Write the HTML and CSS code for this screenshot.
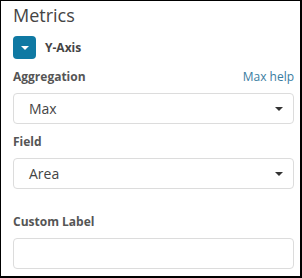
FILE: index.html
```html
<!DOCTYPE html>
<html lang="en">

<head>
  <meta charset="UTF-8" />
  <title>Metrics</title>
  <link rel="stylesheet" href="styles.css">
</head>

<body>
  <div class="panel">
    <h1 class="title">Metrics</h1>

    <div class="agg-head">
      <button class="toggle"><span class="caret white"></span></button>
      <span class="agg-name">Y-Axis</span>
    </div>

    <div class="group">
      <div class="label-row">
        <label>Aggregation</label>
        <a class="help" href="#">Max help</a>
      </div>
      <div class="select">
        <span>Max</span>
        <span class="caret"></span>
      </div>
    </div>

    <div class="group">
      <div class="label-row">
        <label>Field</label>
      </div>
      <div class="select">
        <span>Area</span>
        <span class="caret"></span>
      </div>
    </div>

    <div class="group custom">
      <div class="label-row">
        <label>Custom Label</label>
      </div>
      <input class="text-input" type="text">
    </div>
  </div>
</body>

</html>
```

FILE: styles.css
```css
* {
  box-sizing: border-box;
}

html,
body {
  margin: 0;
  padding: 0;
  font-family: 'Open Sans', sans-serif;
  color: #444;
  background: #fff;
}

.panel {
  width: 302px;
  height: 278px;
  border-style: solid;
  border-color: #000;
  border-width: 1px 2px 2px 1px;
  padding: 2px 6px 0 12px;
}

.title {
  margin: 0;
  font-size: 18px;
  line-height: 24px;
  font-weight: 400;
  color: #444;
}

.agg-head {
  display: flex;
  align-items: center;
  gap: 9px;
  margin-top: 9px;
  height: 23px;
}

.toggle {
  width: 23px;
  height: 23px;
  padding: 0;
  border: none;
  border-radius: 4px;
  background-color: #0f79a3;
  display: flex;
  align-items: center;
  justify-content: center;
}

.agg-name {
  font-size: 12px;
  font-weight: bold;
  color: #444;
}

.caret {
  width: 0;
  height: 0;
  border-left: 4px solid transparent;
  border-right: 4px solid transparent;
  border-top: 4px solid #333;
}

.caret.white {
  border-top-color: #fff;
  margin-top: 1px;
}

.group {
  margin-top: 10px;
}

.group.custom {
  margin-top: 25px;
}

.label-row {
  display: flex;
  justify-content: space-between;
  align-items: baseline;
  margin-bottom: 8px;
}

label {
  font-size: 12px;
  line-height: 16px;
  font-weight: bold;
  color: #555;
}

.help {
  font-size: 12px;
  line-height: 16px;
  color: #3a7d9f;
  text-decoration: none;
}

.select {
  height: 31px;
  border: 1px solid #dcdcdc;
  border-radius: 4px;
  display: flex;
  align-items: center;
  justify-content: space-between;
  padding: 0 10px 0 15px;
  font-size: 14px;
  color: #444;
}

.text-input {
  display: block;
  width: 100%;
  height: 31px;
  border: 1px solid #dcdcdc;
  border-radius: 4px;
  outline: none;
}
```
